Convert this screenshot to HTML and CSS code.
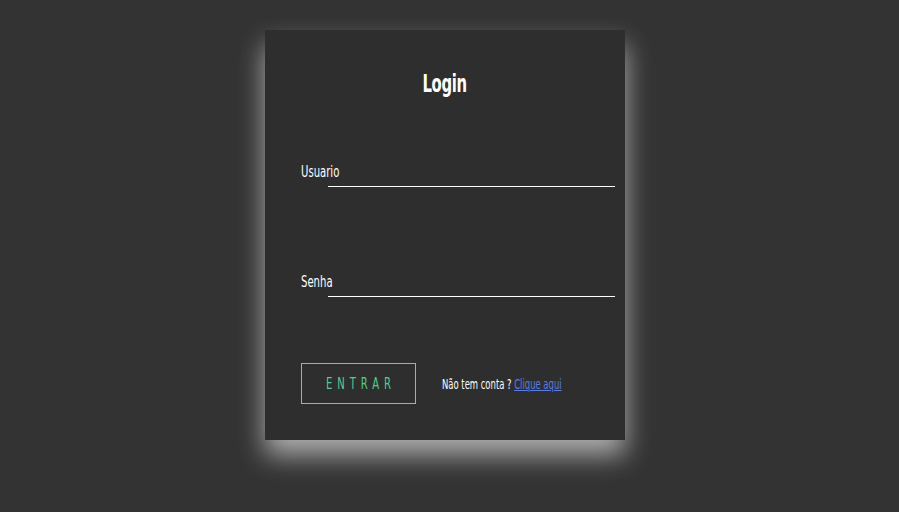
FILE: index.html
```html
<!DOCTYPE html>
<html lang="pt">
<head>
<meta charset="utf-8">
<title>Login</title>
<link rel="stylesheet" href="styles.css">
</head>
<body>
<div class="card">
  <h2 class="title"><span class="sq sq-title">Login</span></h2>
  <form class="form">
    <div class="field field-user">
      <label class="label"><span class="sq sq-label">Usuario</span></label>
      <div class="line"></div>
    </div>
    <div class="field">
      <label class="label"><span class="sq sq-label">Senha</span></label>
      <div class="line"></div>
    </div>
    <div class="actions">
      <div class="btn" role="button"><span class="sq sq-btn">ENTRAR</span></div>
      <span class="signup"><span class="sq sq-small">Não tem conta ? <a href="#" class="link">Clique aqui</a></span></span>
    </div>
  </form>
</div>
</body>
</html>
```
FILE: styles.css
```css
html, body {
  margin: 0;
  padding: 0;
  background: #333333;
  height: 100%;
}
body {
  font-family: "DejaVu Sans Condensed", "DejaVu Sans", "Liberation Sans", sans-serif;
  font-stretch: condensed;
  color: #ffffff;
  overflow: hidden;
}
.sq {
  display: inline-block;
  white-space: nowrap;
  transform-origin: left center;
}
.card {
  box-sizing: border-box;
  width: 360px;
  height: 410px;
  margin: 30px 0 0 265px;
  background: #2e2e2e;
  box-shadow: 0 15px 25px rgba(255, 255, 255, 0.6);
  padding: 0 10px 0 36px;
  display: flex;
  flex-direction: column;
}
.title {
  margin: 0;
  padding-top: 40px;
  padding-right: 26px;
  font-size: 25px;
  line-height: 28px;
  font-weight: bold;
  text-align: center;
}
.sq-title {
  transform-origin: center center;
  transform: scaleX(0.66);
  letter-spacing: -0.5px;
}
.form {
  display: flex;
  flex-direction: column;
  margin-top: 63px;
}
.field {
  display: flex;
  flex-direction: column;
}
.field-user {
  margin-bottom: 84px;
}
.label {
  font-size: 16px;
  line-height: 18px;
  margin-top: 2px;
}
.sq-label {
  transform: scaleX(0.7);
}
.line {
  margin-left: 27px;
  margin-top: 5px;
  height: 1px;
  background: #ffffff;
}
.actions {
  display: flex;
  align-items: center;
  margin-top: 66px;
}
.btn {
  box-sizing: border-box;
  flex: 0 0 115px;
  width: 115px;
  height: 41px;
  border: 1px solid #5ad99a;
  color: #4fd08e;
  font-size: 16px;
  cursor: pointer;
  display: flex;
  align-items: center;
  justify-content: center;
}
.sq-btn {
  transform-origin: center center;
  transform: scaleX(0.7);
  letter-spacing: 7px;
  padding-left: 7px;
}
.signup {
  flex: 0 0 auto;
  margin-left: 26px;
  font-size: 14px;
  color: #ffffff;
}
.sq-small {
  transform: scaleX(0.67);
}
.link {
  color: #5a7ee6;
  text-decoration: underline;
}
```
